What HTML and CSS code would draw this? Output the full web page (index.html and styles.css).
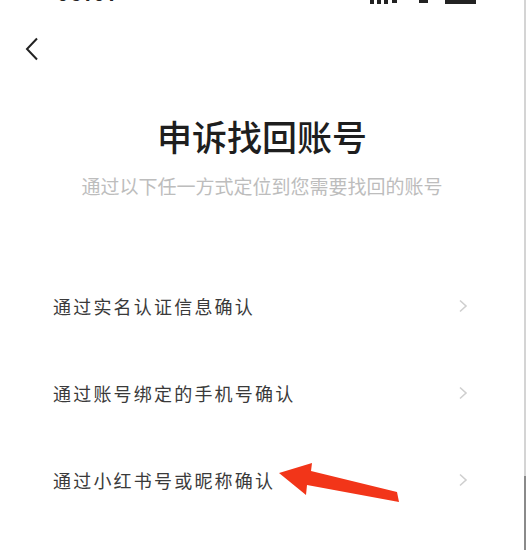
FILE: index.html
```html
<!DOCTYPE html>
<html lang="zh-CN">
<head>
<meta charset="utf-8">
<title>申诉找回账号</title>
<link rel="stylesheet" href="styles.css">
</head>
<body>
<div class="screen">
  <div class="statusbar">
    <span class="time">09:07</span>
    <svg class="sys" width="108" height="8" viewBox="0 0 108 8">
      <rect x="0" y="0" width="4" height="4" fill="#222"/>
      <rect x="7" y="0" width="4" height="4" fill="#222"/>
      <rect x="14" y="0" width="4" height="4" fill="#222"/>
      <rect x="22" y="0" width="5" height="3" fill="#222"/>
      <rect x="49" y="0" width="9" height="3" fill="#222"/>
      <rect x="75" y="0" width="31" height="4" fill="#222"/>
    </svg>
  </div>
  <div class="nav">
    <svg class="back" width="14" height="24" viewBox="0 0 14 24">
      <path d="M12 1.5 L2 12 L12 22.5" fill="none" stroke="#222" stroke-width="2"/>
    </svg>
  </div>
  <h1 class="title">申诉找回账号</h1>
  <p class="subtitle">通过以下任一方式定位到您需要找回的账号</p>
  <div class="list">
    <div class="item">
      <span class="label">通过实名认证信息确认</span>
      <svg class="chev" width="10" height="14" viewBox="0 0 10 14"><path d="M2 1.5 L8 7 L2 12.5" fill="none" stroke="#cfcfcf" stroke-width="1.6"/></svg>
    </div>
    <div class="item">
      <span class="label">通过账号绑定的手机号确认</span>
      <svg class="chev" width="10" height="14" viewBox="0 0 10 14"><path d="M2 1.5 L8 7 L2 12.5" fill="none" stroke="#cfcfcf" stroke-width="1.6"/></svg>
    </div>
    <div class="item">
      <span class="label">通过小红书号或昵称确认</span>
      <svg class="chev" width="10" height="14" viewBox="0 0 10 14"><path d="M2 1.5 L8 7 L2 12.5" fill="none" stroke="#cfcfcf" stroke-width="1.6"/></svg>
    </div>
  </div>
  <svg class="pointer" width="529" height="550" viewBox="0 0 529 550">
    <polygon points="279,473 312,463 311,471 397,492 399,502 307,485 306,495" fill="#f23519"/>
  </svg>
  <div class="scrollbar"><div class="thumb"></div></div>
</div>
</body>
</html>
```

FILE: styles.css
```css
html, body {
  margin: 0;
  padding: 0;
  background: #ffffff;
}
body {
  font-family: "Noto Sans CJK SC", "Noto Sans", sans-serif;
  color: #222;
}
.screen {
  position: relative;
  width: 529px;
  height: 550px;
  overflow: hidden;
}
.statusbar {
  height: 8px;
  overflow: hidden;
  display: flex;
  justify-content: space-between;
  align-items: flex-end;
  padding: 0 51px 0 57px;
}
.time {
  font-family: "Liberation Sans", sans-serif;
  font-weight: 700;
  font-size: 21px;
  line-height: 21px;
  color: #222;
  letter-spacing: 2px;
  margin-bottom: 0;
  align-self: flex-end;
  position: relative;
  top: -4px;
}
.sys {
  display: block;
  align-self: flex-start;
}
.nav {
  padding: 29px 0 0 25px;
  height: 24px;
}
.back {
  display: block;
}
.title {
  margin: 54px 0 0;
  font-size: 35px;
  line-height: 42px;
  font-weight: 500;
  text-align: center;
  color: #1e1e1e;
  padding-right: 5px;
}
.subtitle {
  margin: 17px 0 0;
  font-size: 19px;
  line-height: 23px;
  text-align: center;
  color: #bdbdbd;
  padding-right: 5px;
}
.list {
  margin-top: 65px;
  display: flex;
  flex-direction: column;
}
.item {
  height: 87px;
  display: flex;
  align-items: center;
  justify-content: space-between;
  padding: 0 61px 0 53px;
}
.label {
  font-size: 18px;
  letter-spacing: 2.2px;
  color: #3a3a3a;
}
.chev {
  display: block;
}
.pointer {
  position: absolute;
  left: 0;
  top: 0;
  pointer-events: none;
}
.scrollbar {
  position: absolute;
  top: 0;
  right: 3px;
  width: 2px;
  height: 550px;
  background: #d4d4d4;
}
.thumb {
  position: absolute;
  left: 0;
  bottom: 0;
  width: 2px;
  height: 74px;
  background: #8a8a8a;
}
```
